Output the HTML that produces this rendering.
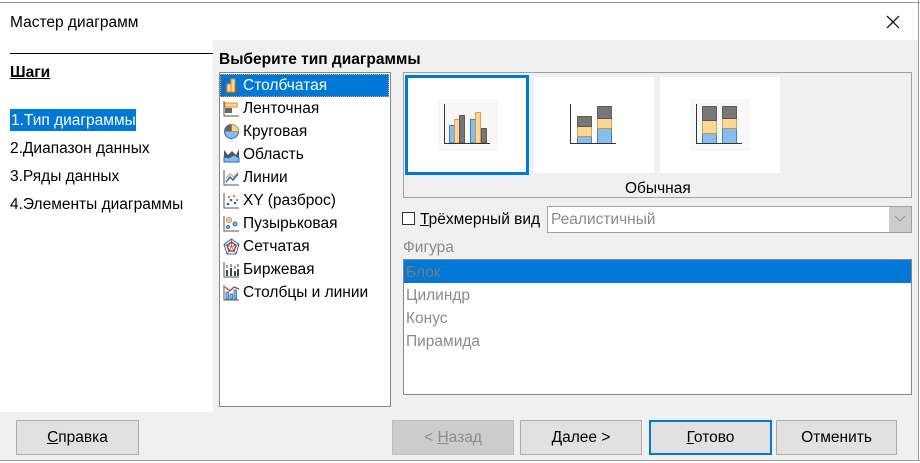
<!DOCTYPE html>
<html><head><meta charset="utf-8"><style>
*{margin:0;padding:0;box-sizing:border-box}
body{width:920px;height:463px;position:relative;overflow:hidden;background:#fff;font-family:"Segoe UI","Liberation Sans","Noto Sans CJK SC",sans-serif;font-size:15.5px;color:#000}
.a{position:absolute}
.t{position:absolute;white-space:nowrap;line-height:20px}
.btn{position:absolute;height:35px;top:420px;background:#e1e1e1;border:1px solid #adadad;text-align:center;line-height:33px;font-size:15.5px}
.row{position:absolute;left:221px;width:167px;height:23px;line-height:24px;padding-left:22px}
.row svg{position:absolute;left:2px;top:3px}
.g{color:#8a8a8a}
</style></head><body>
<div class="a" style="left:0;top:0;width:920px;height:3px;background:#fff;border-bottom:1px solid #999"></div>
<div class="a" style="left:918px;top:0;width:1px;height:463px;background:#999"></div>
<div class="a" style="left:0;top:460px;width:920px;height:3px;background:#fff;border-top:1px solid #999"></div>
<div class="a" style="left:0;top:3px;width:918px;height:457px;background:#f0f0f0"></div>
<div class="a" style="left:0;top:3px;width:918px;height:37px;background:#fff"></div>
<div class="t" style="left:10px;top:13px">Мастер диаграмм</div>
<svg class="a" style="left:886px;top:15px" width="14" height="14"><path d="M1 1L13 13M13 1L1 13" stroke="#000" stroke-width="1.2"/></svg>
<div class="a" style="left:0;top:40px;width:213px;height:372px;background:#fff"></div>
<div class="a" style="left:10px;top:53px;width:203px;height:1px;background:#000"></div>
<div class="t" style="left:10px;top:63px;font-weight:bold;text-decoration:underline">Шаги</div>
<div class="a" style="left:10px;top:109px;width:126px;height:22px;background:#0078d7"></div>
<div class="t" style="left:11px;top:111px;color:#fff">1.Тип диаграммы</div>
<div class="t" style="left:10px;top:139px">2.Диапазон данных</div>
<div class="t" style="left:10px;top:167px">3.Ряды данных</div>
<div class="t" style="left:10px;top:195px">4.Элементы диаграммы</div>
<div class="t" style="left:219px;top:50px;font-weight:bold">Выберите тип диаграммы</div>
<div class="a" style="left:219px;top:72px;width:172px;height:335px;background:#fff;border:1px solid #828790"></div>
<div class="a" style="left:220px;top:74px;width:169px;height:23px;background:#0078d7;border:1px dotted #f0a030"></div>
<div class="row" style="top:74px;color:#fff"><svg width="17" height="17"><path d="M1 1V16H16" stroke="#555" fill="none"/><rect x="4" y="7" width="4" height="8" fill="#f8d898" stroke="#e88a2a"/><rect x="8" y="2" width="4" height="13" fill="#f8d898" stroke="#e88a2a"/><rect x="12" y="9" width="3" height="6" fill="#666"/></svg>Столбчатая</div>
<div class="row" style="top:97px"><svg width="17" height="17"><path d="M1 1V16H16" stroke="#555" fill="none"/><rect x="2" y="3" width="12" height="4" fill="#f8d898" stroke="#e88a2a"/><rect x="2" y="8" width="7" height="5" fill="#666"/></svg>Ленточная</div>
<div class="row" style="top:120px"><svg width="17" height="17"><circle cx="8.5" cy="8.5" r="7" fill="#85bdec" stroke="#1a6fbf"/><path d="M8.5 8.5V1.5A7 7 0 0 1 15.5 8.5Z" fill="#f8d898" stroke="#e88a2a"/><path d="M8.5 8.5H1.5A7 7 0 0 1 8.5 1.5Z" fill="#666"/></svg>Круговая</div>
<div class="row" style="top:143px"><svg width="17" height="17"><path d="M1 4L5 9L9 5L13 9L16 3V16H1Z" fill="#555"/><path d="M1 11L6 12L11 9L16 12V16H1Z" fill="#85bdec" stroke="#1a6fbf"/></svg>Область</div>
<div class="row" style="top:166px"><svg width="17" height="17"><path d="M1 1V16H16" stroke="#555" fill="none"/><path d="M3 13L7 8L10 11L15 5" stroke="#1a6fbf" fill="none" stroke-width="1.5"/><path d="M3 9L7 5L11 8L15 3" stroke="#e88a2a" fill="none"/></svg>Линии</div>
<div class="row" style="top:189px"><svg width="17" height="17"><path d="M1 1V16H16" stroke="#555" fill="none"/><circle cx="5" cy="12" r="1.3" fill="#1a6fbf"/><circle cx="8" cy="8" r="1.3" fill="#1a6fbf"/><circle cx="12" cy="11" r="1.3" fill="#1a6fbf"/><circle cx="6" cy="5" r="1.3" fill="#e88a2a"/><circle cx="11" cy="4" r="1.3" fill="#e88a2a"/><circle cx="14" cy="8" r="1.3" fill="#e88a2a"/></svg>XY (разброс)</div>
<div class="row" style="top:212px"><svg width="17" height="17"><path d="M1 1V16H16" stroke="#555" fill="none"/><circle cx="6" cy="5" r="2.5" fill="#f8c888" stroke="#e88a2a"/><circle cx="12" cy="9" r="2" fill="#85bdec" stroke="#1a6fbf"/><circle cx="5" cy="12" r="1.5" fill="#85bdec" stroke="#1a6fbf"/></svg>Пузырьковая</div>
<div class="row" style="top:235px"><svg width="17" height="17"><path d="M8.5 1L16 6.5L13 16H4L1 6.5Z" fill="none" stroke="#1a6fbf"/><path d="M8.5 4L13 7.5L11 13H6L4 7.5Z" fill="none" stroke="#d03030" stroke-width="1.5"/><path d="M8.5 8.5L8.5 1M8.5 8.5L16 6.5M8.5 8.5L13 16M8.5 8.5L4 16M8.5 8.5L1 6.5" stroke="#555" stroke-width=".7"/></svg>Сетчатая</div>
<div class="row" style="top:258px"><svg width="17" height="17"><path d="M1 1V16H16" stroke="#555" fill="none"/><rect x="3" y="9" width="2" height="6" fill="#444"/><rect x="7" y="7" width="2" height="8" fill="#444"/><rect x="11" y="10" width="2" height="5" fill="#444"/><rect x="14" y="8" width="2" height="7" fill="#444"/><path d="M4 4V7M8 3V6M12 5V8M15 3V6" stroke="#444"/></svg>Биржевая</div>
<div class="row" style="top:281px"><svg width="17" height="17"><path d="M1 1V16H16" stroke="#555" fill="none"/><rect x="3" y="8" width="2.5" height="7" fill="#85bdec" stroke="#1a6fbf" stroke-width=".8"/><rect x="7" y="10" width="2.5" height="5" fill="#85bdec" stroke="#1a6fbf" stroke-width=".8"/><rect x="11" y="6" width="2.5" height="9" fill="#85bdec" stroke="#1a6fbf" stroke-width=".8"/><path d="M2 3L7 7L11 3L16 5" stroke="#d03030" fill="none" stroke-width="1.3"/></svg>Столбцы и линии</div>

<div class="a" style="left:403px;top:72px;width:509px;height:126px;border:1px solid #a0a0a0"></div>
<div class="a" style="left:405px;top:75px;width:124px;height:100px;background:#fff;border:3px solid #0078d7"></div>
<div class="a" style="left:534px;top:77px;width:120px;height:96px;background:#fff"></div>
<div class="a" style="left:660px;top:77px;width:120px;height:96px;background:#fff"></div>
<div class="t" style="left:625px;top:179px">Обычная</div>
<svg class="a" style="left:0;top:0" width="920" height="463">
<rect x="438" y="99" width="60" height="52" fill="#f8f8f8"/>
<rect x="564" y="99" width="60" height="52" fill="#fff"/>
<rect x="690" y="99" width="60" height="52" fill="#f8f8f8"/>
<g stroke-width="0.8">
<rect x="449.5" y="125.5" width="5" height="17.5" fill="#85bdec" stroke="#1a6fbf"/>
<rect x="454.5" y="119.5" width="5" height="23.5" fill="#f8d898" stroke="#e88a2a"/>
<rect x="459.5" y="115.5" width="5" height="27.5" fill="#777" stroke="#444"/>
<rect x="470.5" y="119.5" width="5" height="23.5" fill="#85bdec" stroke="#1a6fbf"/>
<rect x="475.5" y="112.5" width="5" height="30.5" fill="#f8d898" stroke="#e88a2a"/>
<rect x="481.5" y="128.5" width="5" height="14.5" fill="#777" stroke="#444"/>
<rect x="577.5" y="136.5" width="14" height="7" fill="#85bdec" stroke="#1a6fbf"/>
<rect x="577.5" y="126.5" width="14" height="10" fill="#f8d898" stroke="#e88a2a"/>
<rect x="577.5" y="116.5" width="14" height="10" fill="#777" stroke="#444"/>
<rect x="597.5" y="128.5" width="14" height="15" fill="#85bdec" stroke="#1a6fbf"/>
<rect x="597.5" y="118.5" width="14" height="10" fill="#f8d898" stroke="#e88a2a"/>
<rect x="597.5" y="106.5" width="14" height="12" fill="#777" stroke="#444"/>
<rect x="702.5" y="133.5" width="14" height="10" fill="#85bdec" stroke="#1a6fbf"/>
<rect x="702.5" y="120.5" width="14" height="13" fill="#f8d898" stroke="#e88a2a"/>
<rect x="702.5" y="106.5" width="14" height="14" fill="#777" stroke="#444"/>
<rect x="722.5" y="128.5" width="14" height="15" fill="#85bdec" stroke="#1a6fbf"/>
<rect x="722.5" y="118.5" width="14" height="10" fill="#f8d898" stroke="#e88a2a"/>
<rect x="722.5" y="106.5" width="14" height="12" fill="#777" stroke="#444"/>
</g>
<path d="M444.5 104V143.5H490M570.5 104V143.5H616M696.5 104V143.5H742" stroke="#333" fill="none"/>
</svg>
<div class="a" style="left:402px;top:212px;width:13px;height:13px;border:1px solid #333;background:#fff"></div>
<div class="t" style="left:420px;top:210px"><u>Т</u>рёхмерный вид</div>
<div class="a" style="left:547px;top:206px;width:365px;height:27px;background:#fff;border:1px solid #a0a0a0"></div>
<div class="t g" style="left:551px;top:210px">Реалистичный</div>
<div class="a" style="left:889px;top:207px;width:22px;height:25px;background:#ccc"></div>
<svg class="a" style="left:894px;top:215px" width="12" height="8"><path d="M1 1L6 6L11 1" stroke="#999" fill="none"/></svg>
<div class="t g" style="left:403px;top:238px">Фигура</div>
<div class="a" style="left:403px;top:259px;width:509px;height:136px;background:#fff;border:1px solid #828790"></div>
<div class="a" style="left:404px;top:260px;width:507px;height:23px;background:#0078d7"></div>
<div class="t g" style="left:406px;top:263px;color:#7a7a7a">Блок</div>
<div class="t g" style="left:406px;top:286px">Цилиндр</div>
<div class="t g" style="left:406px;top:309px">Конус</div>
<div class="t g" style="left:406px;top:332px">Пирамида</div>
<div class="btn" style="left:16px;width:123px"><u>С</u>правка</div>
<div class="btn" style="left:392px;width:122px;background:#cccccc;border-color:#bfbfbf;color:#8d8d8d">&lt; <u>Н</u>азад</div>
<div class="btn" style="left:520px;width:122px"><u>Д</u>алее &gt;</div>
<div class="btn" style="left:649px;width:123px;border:2px solid #0078d7;line-height:31px"><u>Г</u>отово</div>
<div class="btn" style="left:776px;width:121px">Отменить</div>
</body></html>
